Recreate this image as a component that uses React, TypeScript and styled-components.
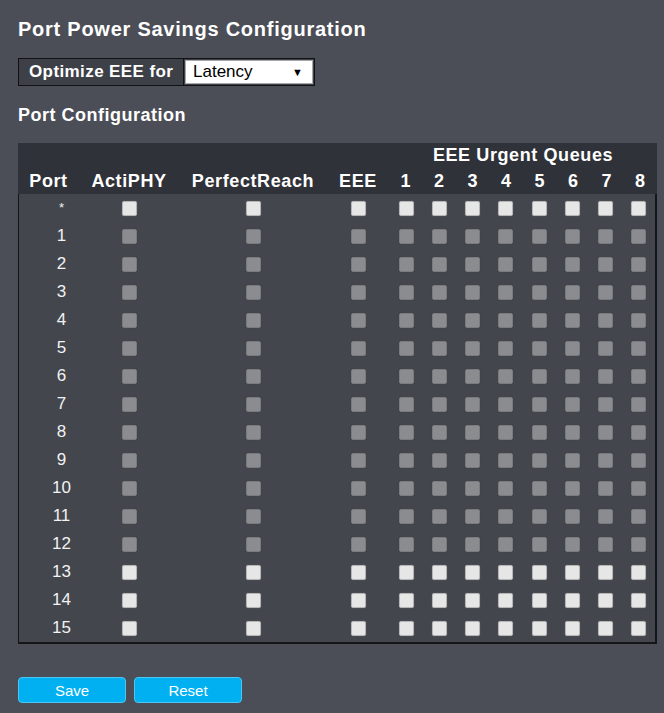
import React from "react";
import styled, { createGlobalStyle } from "styled-components";

const GlobalStyle = createGlobalStyle`
  html, body {
    margin: 0;
    padding: 0;
    background: #4b4e56;
  }
  body {
    font-family: "Liberation Sans", Arial, sans-serif;
    color: #ffffff;
  }
`;

const COLUMNS = "61px 100px 148px 62px repeat(8, 1fr)";
const QUEUES = [1, 2, 3, 4, 5, 6, 7, 8];

type PortRow = {
  label: string;
  enabled: boolean;
};

const rows: PortRow[] = [
  { label: "*", enabled: true },
  ...Array.from({ length: 15 }, (_, i) => ({
    label: String(i + 1),
    enabled: i + 1 >= 13,
  })),
];

function App() {
  return (
    <>
      <GlobalStyle />
      <Page>
        <Title>Port Power Savings Configuration</Title>

        <OptimizeBox>
          <OptimizeLabel>Optimize EEE for</OptimizeLabel>
          <SelectBox>
            <span>Latency</span>
            <Arrow>▼</Arrow>
          </SelectBox>
        </OptimizeBox>

        <SubTitle>Port Configuration</SubTitle>

        <Table>
          <HeadRow>
            <HeadCell $col="5 / 13">EEE Urgent Queues</HeadCell>
          </HeadRow>
          <HeadRow>
            <HeadCell>Port</HeadCell>
            <HeadCell>ActiPHY</HeadCell>
            <HeadCell>PerfectReach</HeadCell>
            <HeadCell>EEE</HeadCell>
            {QUEUES.map((q) => (
              <HeadCell key={q}>{q}</HeadCell>
            ))}
          </HeadRow>

          <Body>
            {rows.map((row) => (
              <BodyRow key={row.label}>
                <PortCell $star={row.label === "*"}>{row.label}</PortCell>
                <Cell>
                  <Check $on={row.enabled} />
                </Cell>
                <Cell>
                  <Check $on={row.enabled} />
                </Cell>
                <Cell>
                  <Check $on={row.enabled} />
                </Cell>
                {QUEUES.map((q) => (
                  <Cell key={q}>
                    <Check $on={row.enabled} />
                  </Cell>
                ))}
              </BodyRow>
            ))}
          </Body>
        </Table>

        <Buttons>
          <Button>Save</Button>
          <Button>Reset</Button>
        </Buttons>
      </Page>
    </>
  );
}

const Page = styled.div`
  width: 664px;
  min-height: 713px;
  box-sizing: border-box;
  padding: 17px 7px 0 18px;
  background: #4b4e56;
`;

const Title = styled.h1`
  margin: 0;
  font-size: 20px;
  line-height: 24px;
  font-weight: bold;
  letter-spacing: 0.75px;
  color: #ffffff;
`;

const OptimizeBox = styled.div`
  display: inline-flex;
  margin-top: 17px;
  height: 28px;
  border: 1px solid #111214;
  box-sizing: border-box;
  background: #3e4047;
`;

const OptimizeLabel = styled.div`
  display: flex;
  align-items: center;
  width: 165px;
  padding-left: 10px;
  box-sizing: border-box;
  font-size: 17px;
  font-weight: bold;
  letter-spacing: 0.4px;
  white-space: nowrap;
  border-right: 1px solid #111214;
`;

const SelectBox = styled.div`
  display: flex;
  align-items: center;
  justify-content: space-between;
  width: 128px;
  margin: 1px;
  padding: 0 9px 0 7px;
  box-sizing: border-box;
  background: #ffffff;
  border: 1px solid #a9a9a9;
  color: #000000;
  font-size: 17px;
`;

const Arrow = styled.span`
  font-size: 11px;
  color: #000000;
`;

const SubTitle = styled.h2`
  margin: 18px 0 0;
  font-size: 18px;
  line-height: 22px;
  font-weight: bold;
  letter-spacing: 0.5px;
  color: #ffffff;
`;

const Table = styled.div`
  margin-top: 17px;
  width: 639px;
`;

const HeadRow = styled.div`
  display: grid;
  grid-template-columns: ${COLUMNS};
  height: 25px;
  background: #2f3238;
  &:nth-child(2) {
    height: 26px;
  }
`;

const HeadCell = styled.div<{ $col?: string }>`
  grid-column: ${(p) => p.$col ?? "auto"};
  display: flex;
  align-items: center;
  justify-content: center;
  font-size: 18px;
  font-weight: bold;
  letter-spacing: 0.6px;
  white-space: nowrap;
  color: #ffffff;
`;

const Body = styled.div`
  background: #43464d;
  border-style: solid;
  border-color: #141517;
  border-width: 0 2px 2px 1px;
`;

const BodyRow = styled.div`
  display: grid;
  grid-template-columns: ${COLUMNS};
  height: 28px;
  margin-right: -1px;
`;

const Cell = styled.div`
  display: flex;
  align-items: center;
  justify-content: center;
`;

const PortCell = styled(Cell)<{ $star: boolean }>`
  padding-left: 24px;
  font-size: ${(p) => (p.$star ? "13px" : "17px")};
  color: #f2f2f2;
  padding-bottom: ${(p) => (p.$star ? "1px" : "0")};
`;

const Check = styled.span<{ $on: boolean }>`
  display: block;
  width: 13px;
  height: 13px;
  margin-left: -1px;
  border-radius: 2px;
  background: ${(p) => (p.$on ? "#e6e6e6" : "#8b8c90")};
  border: 1px solid ${(p) => (p.$on ? "#b5b5b5" : "#7a7b7f")};
  box-shadow: 0 0 1px ${(p) => (p.$on ? "rgba(255,255,255,0.3)" : "rgba(0,0,0,0.2)")};
`;

const Buttons = styled.div`
  display: flex;
  gap: 8px;
  margin-top: 33px;
`;

const Button = styled.button`
  width: 108px;
  height: 26px;
  padding: 0;
  border: 1px solid #4cc6f2;
  border-radius: 4px;
  background: #00b0f0;
  color: #ffffff;
  font-family: "Liberation Sans", Arial, sans-serif;
  font-size: 15px;
  cursor: pointer;
`;

export default App;
